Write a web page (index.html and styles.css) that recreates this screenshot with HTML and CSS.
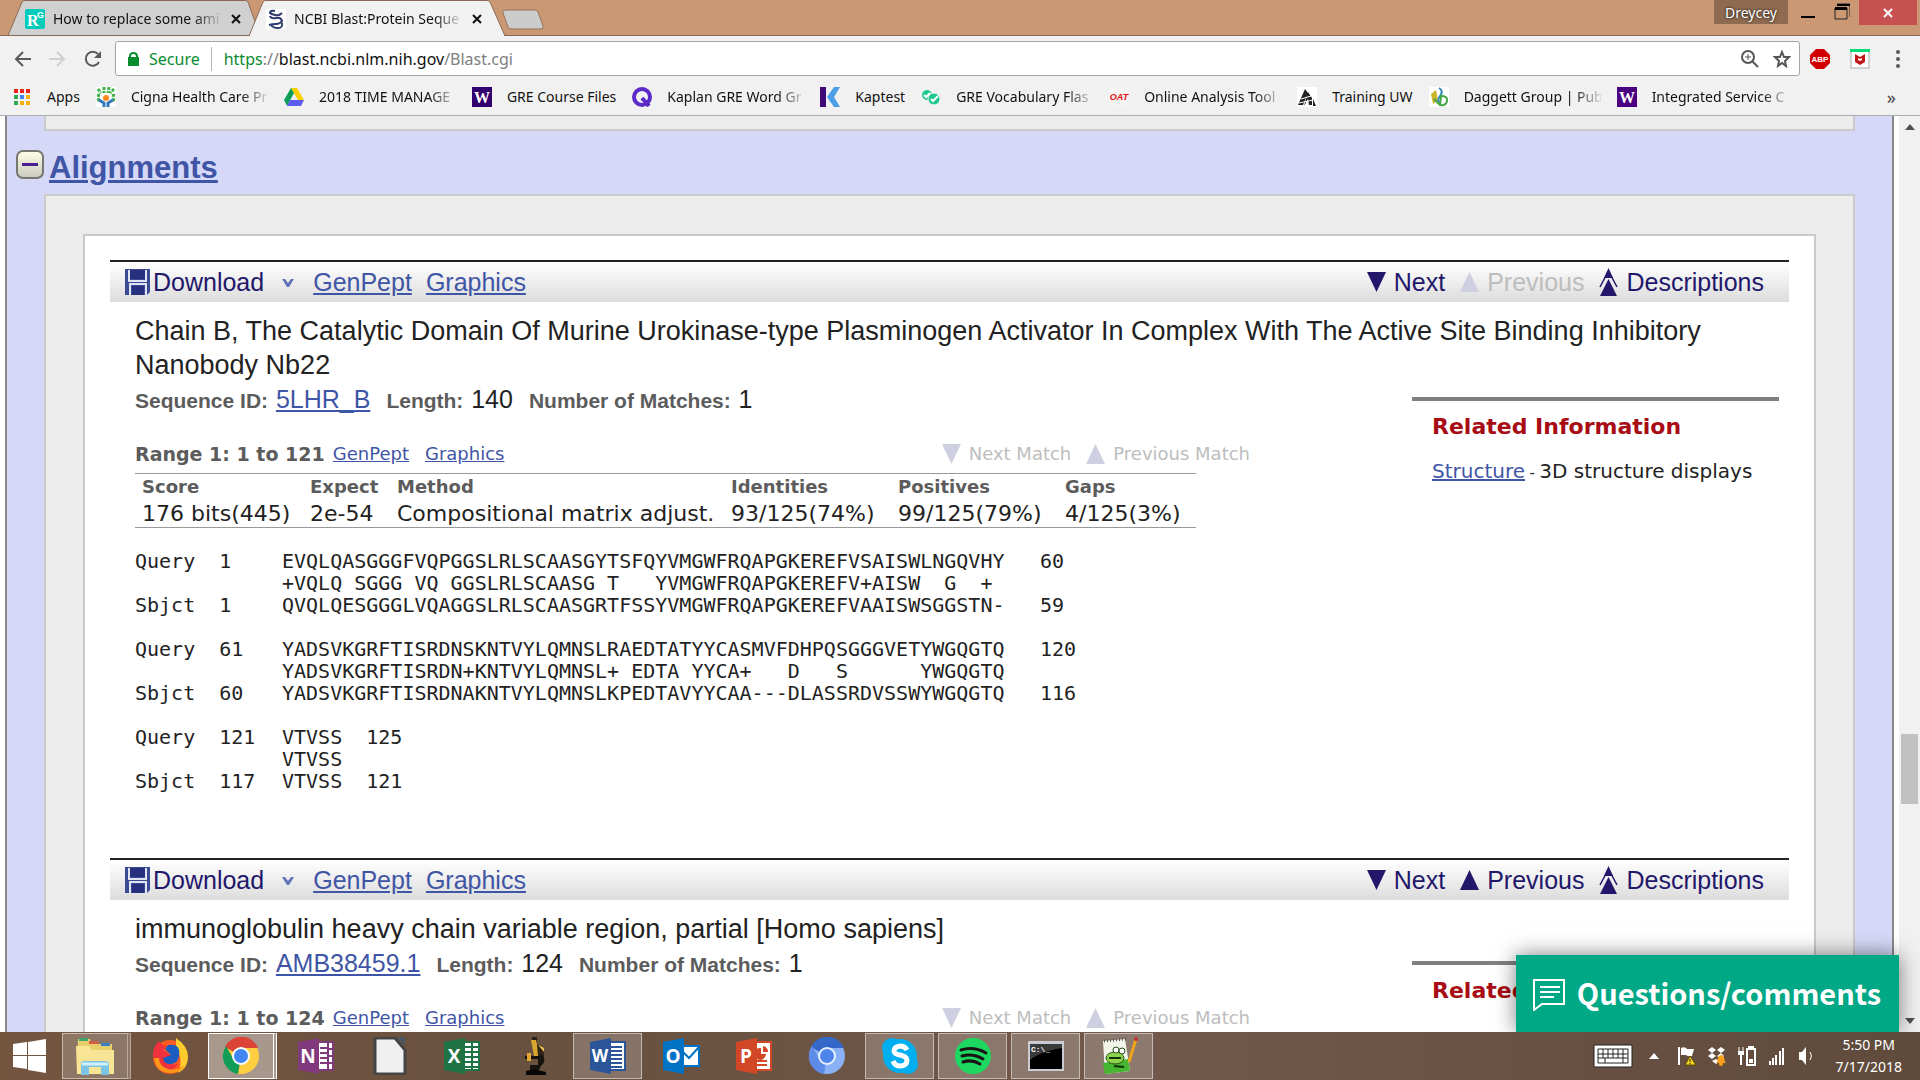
FILE: index.html
```html
<!DOCTYPE html>
<html lang="en">
<head>
<meta charset="utf-8">
<title>NCBI Blast:Protein Sequence</title>
<link rel="stylesheet" href="styles.css">
</head>
<body>
<svg class="defs" aria-hidden="true">
  <symbol id="disk" viewBox="0 0 25 26"><path d="M0 0h25v23l-3 3H0z" fill="#3a4a94"/><path d="M4 1v11h17V1" fill="none" stroke="#dfe3f2" stroke-width="2"/><path d="M5 1h15v9H5z" fill="#26307e"/><path d="M5 26V15h16v11" fill="none" stroke="#dfe3f2" stroke-width="2"/><path d="M7 17h12v9H7z" fill="#26307e"/></symbol>
  <symbol id="down" viewBox="0 0 19 20"><path d="M0 0h19L9.500 20z"/></symbol>
  <symbol id="up" viewBox="0 0 19 20"><path d="M0 20h19L9.500 0z"/></symbol>
  <symbol id="top" viewBox="0 0 19 28"><path d="M1 28h17L9.500 11z"/><path d="M1 19 9.500 3 18 19" fill="none" stroke="currentColor" stroke-width="1.500"/><path d="M5 10 9.500 0 14 10z"/></symbol>
  <symbol id="chev" viewBox="0 0 14 9"><path d="M1 1h3l3 4 3-4h3L8 9H6z" fill="#5f73b5"/></symbol>
  <symbol id="cross" viewBox="0 0 10 10"><path d="M1 1l8 8M9 1L1 9" stroke="currentColor" stroke-width="2"/></symbol>
</svg>

<header class="browser">
  <div class="tabs">
    <div class="tab">
      <svg class="tab-shape" viewBox="0 0 249 36" preserveAspectRatio="none"><path d="M0 35.500 14 2q1-1.500 3-1.500h220q2 0 3 1.500l9 25v8.500z" fill="#d0d0d0" stroke="#8a6a55"/></svg>
      <svg class="fav" viewBox="0 0 20 20"><rect width="20" height="20" rx="2" fill="#00ccbb"/><text x="2" y="17" class="fav-serif">R</text><text x="12" y="9" class="fav-g">G</text></svg>
      <span class="tab-title">How to replace some ami</span>
      <button class="tab-close" aria-label="Close tab"><svg><use href="#cross"/></svg></button>
    </div>
    <div class="tab active">
      <svg class="tab-shape" viewBox="0 0 257 36" preserveAspectRatio="none"><path d="M0 36 14 2q1-1.500 3-1.500h221q2 0 3 1.500l15 34z" fill="#f1f1f1" stroke="#8a6a55"/><path d="M1 36h254" stroke="#f1f1f1" stroke-width="2"/></svg>
      <svg class="fav" viewBox="0 0 20 20"><rect width="20" height="20" fill="#fff"/><path d="M16 4Q13 7 9 6T4 4q0-3 5-2M4 7q1 3 6 2t6 3q-2 3-6 3t-7 1M16 14q1 5-4 5t-7-3" fill="none" stroke="#2d3c6b" stroke-width="2"/></svg>
      <span class="tab-title">NCBI Blast:Protein Seque</span>
      <button class="tab-close" aria-label="Close tab"><svg><use href="#cross"/></svg></button>
    </div>
    <button class="new-tab" aria-label="New tab"><svg viewBox="0 0 42 21"><path d="M4 1h29q2 0 3 2l5 14q1 3-2 3H10q-3 0-4-2L1 4q-1-3 3-3z" fill="#ccc" stroke="#94735c"/></svg></button>
    <div class="window-controls">
      <button class="user">Dreycey</button>
      <button class="wc" aria-label="Minimize"><svg viewBox="0 0 16 20"><path d="M1 16h14v2H1z"/></svg></button>
      <button class="wc" aria-label="Restore"><svg viewBox="0 0 16 20"><path d="M3 4h13v13M1 8v11h12V8z" fill="none" stroke="#222" stroke-width="1"/><path d="M3 4h13v2H3zM1 7h12v3H1z"/></svg></button>
      <button class="close" aria-label="Close"><svg><use href="#cross"/></svg></button>
    </div>
  </div>

  <div class="toolbar">
    <button class="nav" aria-label="Back"><svg viewBox="0 0 18 18"><path d="M17 9H3M9 2 2 9l7 7" fill="none" stroke="#5a5a5a" stroke-width="2"/></svg></button>
    <button class="nav" aria-label="Forward"><svg viewBox="0 0 18 18"><path d="M1 9h14M9 2l7 7-7 7" fill="none" stroke="#d0d0d0" stroke-width="2"/></svg></button>
    <button class="nav reload" aria-label="Reload"><svg viewBox="0 0 18 18"><path d="M15 12A7 7 0 1 1 14 4" fill="none" stroke="#5a5a5a" stroke-width="2"/><path d="M17 1v7h-7z" fill="#5a5a5a"/></svg></button>
    <div class="omnibox">
      <svg class="lock" viewBox="0 0 11 14"><path d="M0 5h11v9H0z" fill="#0b8b30"/><path d="M2 6V4a3.500 3 0 0 1 7 0v2" fill="none" stroke="#0b8b30" stroke-width="2"/></svg>
      <span class="secure">Secure</span>
      <div class="url" role="textbox" aria-label="Address"><span class="scheme">https</span><span class="dim">://</span>blast.ncbi.nlm.nih.gov<span class="dim">/Blast.cgi</span></div>
      <button class="icon" aria-label="Zoom"><svg viewBox="0 0 18 18"><circle cx="7" cy="7" r="6" fill="none" stroke="#555" stroke-width="2"/><path d="M11 11l6 6" stroke="#555" stroke-width="2"/><path d="M4 7h6M7 4v6" stroke="#555"/></svg></button>
      <button class="icon" aria-label="Bookmark this page"><svg viewBox="0 0 18 18"><path d="M9 2l2 5h5l-4 4 1 5-4-3-4 3 1-5-4-4h5z" fill="none" stroke="#555" stroke-width="2"/></svg></button>
    </div>
    <button class="ext" aria-label="Adblock"><svg viewBox="0 0 20 20"><path d="M6 0h8l6 6v8l-6 6H6l-6-6V6z" fill="#d00000"/><text x="10" y="13" class="fav-abp">ABP</text></svg></button>
    <button class="ext" aria-label="Web advisor"><svg viewBox="0 0 20 20"><rect x="1" y="1" width="18" height="18" fill="#fff" stroke="#aaa"/><path d="M0 0h20v3H0z" fill="#05dc78"/><path d="M5 5l5 3 5-3v8l-5 3-5-3z" fill="#c01818"/><path d="M8 9l2 1 2-1v2l-2 1-2-1z" fill="#fff"/></svg></button>
    <button class="ext" aria-label="Menu"><svg viewBox="0 0 20 20"><g fill="#5a5a5a"><circle cx="10" cy="3" r="2"/><circle cx="10" cy="10" r="2"/><circle cx="10" cy="17" r="2"/></g></svg></button>
  </div>

  <nav class="bookmarks">
    <a href="#"><svg viewBox="0 0 20 20"><g fill="#e8241c"><path d="M2 2h4v4H2zM8 2h4v4H8zM14 2h4v4h-4z"/></g><path d="M2 8h4v4H2z" fill="#2da94f"/><path d="M8 8h4v4H8z" fill="#4382f5"/><path d="M14 8h4v4h-4zM14 14h4v4h-4zM8 14h4v4H8z" fill="#f3b20b"/><path d="M2 14h4v4H2z" fill="#2da94f"/></svg><span>Apps</span></a>
    <a href="#"><svg viewBox="0 0 20 20"><rect width="20" height="20" fill="#fff"/><path d="M2 2l3 4M8 0v6M13 0l-1 6M18 2l-4 4M1 8l4 1M19 8l-4 1M1 13l4-1M19 13l-4-1" stroke="#3eb34a" stroke-width="3" stroke-dasharray="3 1"/><circle cx="10" cy="11" r="3" fill="#f58a1f"/><path d="M3 13l5 3v4M17 13l-5 3v4" fill="none" stroke="#3076bd" stroke-width="3"/></svg><span class="long">Cigna Health Care Pr</span></a>
    <a href="#"><svg viewBox="0 0 20 20"><path d="M7 1h6l7 12h-6z" fill="#ffcf00"/><path d="M7 1l3 5-7 13-3-6z" fill="#0f9d58"/><path d="M6 13h14l-3 6H3z" fill="#5a5bf0"/></svg><span class="long">2018 TIME MANAGE</span></a>
    <a href="#"><svg viewBox="0 0 20 20"><rect width="20" height="20" fill="#33006f"/><text x="10" y="16" class="fav-w">W</text></svg><span>GRE Course Files</span></a>
    <a href="#"><svg viewBox="0 0 20 20"><circle cx="10" cy="10" r="8" fill="none" stroke="#5b2ac8" stroke-width="4"/><path d="M10 11l7 8" stroke="#5b2ac8" stroke-width="4"/></svg><span class="long">Kaplan GRE Word Gr</span></a>
    <a href="#"><svg viewBox="0 0 20 20"><path d="M0 0h6v20H0z" fill="#3d0a78"/><path d="M14 0h6l-6 10 6 10h-6L7 10z" fill="#4a9fe8"/></svg><span>Kaptest</span></a>
    <a href="#"><svg viewBox="0 0 20 20"><circle cx="6" cy="8" r="5" fill="#1cc98c"/><circle cx="13" cy="12" r="6" fill="#1cc98c" stroke="#f1f1f1"/><path d="M3 8l2 2 4-4M10 12l2 2 5-5" fill="none" stroke="#fff" stroke-width="2"/></svg><span class="long">GRE Vocabulary Flas</span></a>
    <a href="#"><svg viewBox="0 0 20 20"><rect width="20" height="20" fill="#f6f3f3"/><text x="10" y="13" class="fav-oat">OAT</text></svg><span class="long">Online Analysis Tool</span></a>
    <a href="#"><svg viewBox="0 0 20 20"><rect width="20" height="20" fill="#fff"/><path d="M8 2l3 4-5 12H1zM11 5l4 6v7h-3l-1-6-4 7zM16 12l3 7h-3z" fill="#222"/><path d="M4 12l10-3M2 16l14-3" stroke="#fff"/></svg><span>Training UW</span></a>
    <a href="#"><svg viewBox="0 0 20 20"><rect width="20" height="20" fill="#fff"/><path d="M2 7l5-4 2 10-5 4z" fill="#c9b52b"/><path d="M10 1q5 3 1 8t1 9" fill="none" stroke="#2a86b8" stroke-width="2"/><path d="M12 9q7 0 6 5t-7 4zM5 12l6 6" fill="none" stroke="#46a847" stroke-width="2"/></svg><span class="long">Daggett Group | Pub</span></a>
    <a href="#"><svg viewBox="0 0 20 20"><rect width="20" height="20" fill="#4b0082"/><text x="10" y="16" class="fav-w">W</text></svg><span class="long">Integrated Service C</span></a>
    <button class="more" aria-label="More bookmarks">»</button>
  </nav>
</header>

<div class="viewport">
  <main class="page">
    <div class="prev-box"></div>
    <h2 class="section-head">
      <svg viewBox="0 0 28 29"><defs><linearGradient id="btn" x2="0" y2="1"><stop stop-color="#ffffe8"/><stop offset="1" stop-color="#c9c9bd"/></linearGradient></defs><rect x="1" y="1" width="26" height="27" rx="6" fill="url(#btn)" stroke="#77776f" stroke-width="2"/><path d="M6 13h16v3H6z" fill="#4b1f93"/></svg>
      <a href="#">Alignments</a>
    </h2>
    <div class="outer">
      <div class="inner">
        <section class="hit">
          <div class="bar">
            <button class="download"><svg><use href="#disk"/></svg>Download<svg class="chev"><use href="#chev"/></svg></button>
            <a href="#">GenPept</a><a href="#">Graphics</a>
            <div class="jump">
              <button><svg><use href="#down"/></svg>Next</button>
              <button disabled><svg><use href="#up"/></svg>Previous</button>
              <button><svg class="tall"><use href="#top"/></svg>Descriptions</button>
            </div>
          </div>
          <div class="hit-body">
            <h3>Chain B, The Catalytic Domain Of Murine Urokinase-type Plasminogen Activator In Complex With The Active Site Binding Inhibitory Nanobody Nb22</h3>
            <div class="cols">
              <div class="left">
                <p class="meta"><span><b>Sequence ID: </b><a href="#">5LHR_B</a></span><span><b>Length: </b>140</span><span><b>Number of Matches: </b>1</span></p>
                <div class="range">
                  <h4>Range 1: 1 to 121</h4><a href="#">GenPept</a><a href="#">Graphics</a>
                  <div class="match"><button disabled><svg><use href="#down"/></svg>Next Match</button><button disabled><svg><use href="#up"/></svg>Previous Match</button></div>
                </div>
                <table class="stats">
                  <thead><tr><th class="c-score">Score</th><th class="c-exp">Expect</th><th class="c-meth">Method</th><th class="c-frac">Identities</th><th class="c-frac">Positives</th><th>Gaps</th></tr></thead>
                  <tbody><tr><td>176 bits(445)</td><td>2e-54</td><td>Compositional matrix adjust.</td><td>93/125(74%)</td><td>99/125(79%)</td><td>4/125(3%)</td></tr></tbody>
                </table>
                <div class="align">
                  <pre>Query  1</pre><pre>EVQLQASGGGFVQPGGSLRLSCAASGYTSFQYVMGWFRQAPGKEREFVSAISWLNGQVHY</pre><pre>60</pre>
                  <pre> </pre><pre>+VQLQ SGGG VQ GGSLRLSCAASG T   YVMGWFRQAPGKEREFV+AISW  G  +</pre><pre> </pre>
                  <pre>Sbjct  1</pre><pre>QVQLQESGGGLVQAGGSLRLSCAASGRTFSSYVMGWFRQAPGKEREFVAAISWSGGSTN-</pre><pre>59</pre>
                </div>
                <div class="align">
                  <pre>Query  61</pre><pre>YADSVKGRFTISRDNSKNTVYLQMNSLRAEDTATYYCASMVFDHPQSGGGVETYWGQGTQ</pre><pre>120</pre>
                  <pre> </pre><pre>YADSVKGRFTISRDN+KNTVYLQMNSL+ EDTA YYCA+   D   S      YWGQGTQ</pre><pre> </pre>
                  <pre>Sbjct  60</pre><pre>YADSVKGRFTISRDNAKNTVYLQMNSLKPEDTAVYYCAA---DLASSRDVSSWYWGQGTQ</pre><pre>116</pre>
                </div>
                <div class="align last">
                  <pre>Query  121</pre><pre>VTVSS  125</pre>
                  <pre> </pre><pre>VTVSS</pre>
                  <pre>Sbjct  117</pre><pre>VTVSS  121</pre>
                </div>
              </div>
              <aside class="related"><h4>Related Information</h4><p><a href="#">Structure</a><span class="dash"> - </span>3D structure displays</p></aside>
            </div>
          </div>
        </section>

        <section class="hit">
          <div class="bar">
            <button class="download"><svg><use href="#disk"/></svg>Download<svg class="chev"><use href="#chev"/></svg></button>
            <a href="#">GenPept</a><a href="#">Graphics</a>
            <div class="jump">
              <button><svg><use href="#down"/></svg>Next</button>
              <button><svg><use href="#up"/></svg>Previous</button>
              <button><svg class="tall"><use href="#top"/></svg>Descriptions</button>
            </div>
          </div>
          <div class="hit-body">
            <h3>immunoglobulin heavy chain variable region, partial [Homo sapiens]</h3>
            <div class="cols">
              <div class="left">
                <p class="meta"><span><b>Sequence ID: </b><a href="#">AMB38459.1</a></span><span><b>Length: </b>124</span><span><b>Number of Matches: </b>1</span></p>
                <div class="range">
                  <h4>Range 1: 1 to 124</h4><a href="#">GenPept</a><a href="#">Graphics</a>
                  <div class="match"><button disabled><svg><use href="#down"/></svg>Next Match</button><button disabled><svg><use href="#up"/></svg>Previous Match</button></div>
                </div>
              </div>
              <aside class="related"><h4>Related Information</h4></aside>
            </div>
          </div>
        </section>
      </div>
    </div>
  </main>
  <div class="scrollbar">
    <svg viewBox="0 0 10 6"><path d="M0 6h10L5 0z"/></svg>
    <div class="track"><div class="thumb"></div></div>
    <svg viewBox="0 0 10 6"><path d="M0 0h10L5 6z"/></svg>
  </div>
  <button class="feedback"><svg viewBox="0 0 32 32"><path d="M1 1h30v24H9l-8 6z" fill="none" stroke="#fff" stroke-width="2"/><path d="M7 8h20M7 13h20M7 18h14" stroke="#fff" stroke-width="2"/></svg>Questions/comments</button>
</div>

<footer class="taskbar">
  <button class="start" aria-label="Start"><svg viewBox="0 0 33 34"><path d="M0 5l14-2v13H0zM15 3l18-3v16H15zM0 17h14v13L0 28zM15 17h18v17l-18-3z" fill="#fff"/></svg></button>
  <div class="apps-row">
    <button class="open stack" aria-label="File Explorer"><svg class="wide" viewBox="0 0 40 38"><path d="M3 2h12l2 5h20v30H2z" fill="#e9cf6b"/><path d="M4 1h9v3H4z" fill="#3fa66b"/><path d="M14 4h9v3h-9z" fill="#d95b43"/><path d="M26 6h9v3h-9z" fill="#3b7fc4"/><path d="M1 9h13l3 4h22v24H2z" fill="#f7e595"/><path d="M6 38V27q0-3 3-3h22q3 0 3 3v11h-8v-8H14v8z" fill="#7cc4e4"/><path d="M7 27h26" stroke="#d2f0fb" stroke-width="3"/></svg></button>
    <button aria-label="Firefox"><svg viewBox="0 0 38 38"><circle cx="19" cy="20" r="17" fill="#ff5a1f"/><path d="M25 1q12 8 12 19t-10 16q6-14-2-25z" fill="#ffcb2d"/><path d="M2 17Q3 8 8 4q3 5 8 5l-4 4q4 2 7 5l-5 4q4 7 13 5l-9 9Q4 34 2 17z" fill="#f0313e"/><path d="M17 8q13-2 11 11-1 8-9 8-6 0-7-6l8-3-6-6z" fill="#1b5dc0"/><path d="M3 21q2 14 15 15 11 1 16-8-8 6-17 4-9-3-9-11z" fill="#ff9818"/></svg></button>
    <button class="open stack current" aria-label="Chrome"><svg viewBox="0 0 38 38"><circle cx="19" cy="19" r="18" fill="#ffcd40"/><path d="M19 19L3 10A18 18 0 0 1 36 11H19z" fill="#db4437"/><path d="M19 19l-3 18A18 18 0 0 1 4 9l8 14 9 4z" fill="#0f9d58"/><circle cx="19" cy="19" r="9" fill="#fff"/><circle cx="19" cy="19" r="7" fill="#4285f4"/></svg></button>
    <button aria-label="OneNote"><svg viewBox="0 0 38 38"><path d="M18 5h18v28H18z" fill="#fff" stroke="#80397b" stroke-width="2"/><path d="M31 5v28M23 11h7M23 16h7M23 21h7M23 26h7M31 12h5M31 19h5M31 26h5" stroke="#80397b" stroke-width="2"/><path d="M1 5l21-4v36L1 33z" fill="#80397b"/><text x="11" y="26" class="app-letter">N</text></svg></button>
    <button aria-label="LibreOffice"><svg viewBox="0 0 38 38"><path d="M5 1h20l10 12v24H5z" fill="#f0f0f0" stroke="#444" stroke-width="3"/><path d="M27 0h8v9z" fill="#4c5560"/></svg></button>
    <button aria-label="Excel"><svg viewBox="0 0 38 38"><path d="M18 5h18v28H18z" fill="#fff" stroke="#1f7244" stroke-width="2"/><path d="M22 10h14M22 15h14M22 20h14M22 25h14M22 30h14M29 6v26" stroke="#1f7244" stroke-width="2"/><path d="M1 5l21-4v36L1 33z" fill="#1f7244"/><text x="11" y="26" class="app-letter">X</text></svg></button>
    <button aria-label="Microscope"><svg viewBox="0 0 38 38"><path d="M16 0h5v9h-5z" fill="#2a2118"/><path d="M15 3h5l4 16h-6z" fill="#d9a62e"/><path d="M21 7l7 5v8h-6z" fill="#302519"/><path d="M22 8l6 3v4z" fill="#eac04e"/><path d="M9 19h16v3H9zM25 17q7 6 0 12l-2 4H14v-5h8v-8z" fill="#17130f"/><path d="M10 38v-4l8-2 12 3v3z" fill="#090807"/><path d="M11 16h4v8h-4z" fill="#e0a832"/></svg></button>
    <button class="open" aria-label="Word"><svg viewBox="0 0 38 38"><path d="M18 5h18v28H18z" fill="#fff" stroke="#2a5699" stroke-width="2"/><path d="M22 10h11M22 14h11M22 18h11M22 22h11M22 26h11M22 30h11" stroke="#2a5699" stroke-width="2"/><path d="M1 5l21-4v36L1 33z" fill="#2a5699"/><text x="11" y="25" class="app-letter small">W</text></svg></button>
    <button aria-label="Outlook"><svg viewBox="0 0 38 38"><path d="M20 9h17v20H20z" fill="#fff" stroke="#0072c6" stroke-width="2"/><path d="M21 15l6 6 10-11" fill="none" stroke="#0072c6" stroke-width="2"/><path d="M1 5l21-4v36L1 33z" fill="#0072c6"/><text x="11" y="26" class="app-letter">O</text></svg></button>
    <button aria-label="PowerPoint"><svg viewBox="0 0 38 38"><path d="M18 5h18v28H18z" fill="#fff" stroke="#d24726" stroke-width="2"/><path d="M22 24h10M22 28h10" stroke="#d24726" stroke-width="2"/><path d="M26 11a6 6 0 1 0 5 6h-5z" fill="#d24726"/><path d="M28 9v6h5q0-5-5-6z" fill="#d24726"/><path d="M1 5l21-4v36L1 33z" fill="#d24726"/><text x="11" y="26" class="app-letter">P</text></svg></button>
    <button aria-label="Chromium"><svg viewBox="0 0 38 38"><circle cx="19" cy="19" r="18" fill="#8ab0f5"/><path d="M19 19L3 10A18 18 0 0 1 36 11H19z" fill="#3567c9"/><path d="M19 19l-3 18A18 18 0 0 1 4 9l8 14 9 4z" fill="#5c8be8"/><circle cx="19" cy="19" r="8" fill="#4f84ec" stroke="#e9f0ff" stroke-width="2"/></svg></button>
    <button class="open" aria-label="Skype"><svg viewBox="0 0 38 38"><circle cx="19" cy="19" r="17" fill="#00aff0"/><circle cx="11" cy="11" r="10" fill="#00aff0"/><circle cx="27" cy="27" r="10" fill="#00aff0"/><path d="M26 13q-2-4-7-4-6 1-6 5 0 3 6 4t7 5q0 6-7 6-5 0-7-5" fill="none" stroke="#fff" stroke-width="5"/></svg></button>
    <button class="open" aria-label="Spotify"><svg viewBox="0 0 38 38"><circle cx="19" cy="19" r="18" fill="#1ed760"/><path d="M7 13q13-4 25 3M8 19q11-3 21 3M9 25q9-3 17 2" fill="none" stroke="#191414" stroke-width="3" stroke-linecap="round"/></svg></button>
    <button class="open" aria-label="Command Prompt"><svg viewBox="0 0 38 38"><path d="M1 4h36v30H1z" fill="#c9ccd2"/><path d="M3 7h32v25H3z" fill="#000"/><path d="M3 7h32v4Q12 15 3 23z" fill="#3b3b3b"/><text x="4" y="15" class="app-cmd">C:\_</text></svg></button>
    <button class="open" aria-label="Notepad++"><svg viewBox="0 0 38 38"><path d="M3 4l22-2 5 32-25 3z" fill="#f2f5ea"/><path d="M3 26l25-4 2 12-25 3z" fill="#46b52f"/><path d="M4 4l22-2" stroke="#555" stroke-width="3" stroke-dasharray="1 2"/><ellipse cx="15" cy="21" rx="9" ry="6" fill="#8ed44a" stroke="#2b4d18"/><circle cx="16" cy="13" r="3" fill="#fff" stroke="#2b4d18"/><circle cx="22" cy="14" r="3" fill="#fff" stroke="#2b4d18"/><path d="M9 21h12M14 29l10 1" stroke="#16300c" stroke-width="2"/><path d="M29 25L36 2" stroke="#f0a21c" stroke-width="3"/><circle cx="36" cy="2" r="2" fill="#c03030"/></svg></button>
  </div>
  <div class="tray">
    <svg class="kbd" viewBox="0 0 40 24"><rect x="1" y="1" width="38" height="22" rx="1" fill="#fff" stroke="#222"/><path d="M5 5h30v14H5zM5 10h30M5 14h30M10 5v9M15 5v9M20 5v9M25 5v9M30 5v14M12 14v5" fill="none" stroke="#222"/></svg>
    <svg class="caret" viewBox="0 0 10 6"><path d="M0 6h10L5 0z" fill="#fff"/></svg>
    <svg viewBox="0 0 20 20"><path d="M1 1h2v18H1z" fill="#fff"/><path d="M4 2q4-2 6 1h7l-2 7q-4 1-6-1H4z" fill="#fff"/><path d="M13 10l6 9H8z" fill="#f5d21b" stroke="#5c4a05"/><path d="M13 13v3M13 17v1" stroke="#222"/></svg>
    <svg viewBox="0 0 20 20"><path d="M5 1l4 3-4 3-4-3zM14 1l4 3-4 3-4-3zM5 7l4 3-4 3-4-3zM14 7l3 3-3 3-4-3zM9 13l4 2-4 3-4-3z" fill="#fff"/><path d="M9 17q2-2 2-6 3-4 6 0 0 4 2 6z" fill="#f9a11b"/><circle cx="14" cy="18" r="2" fill="#f9a11b"/></svg>
    <svg viewBox="0 0 20 20"><path d="M2 1v4M6 1v4" stroke="#fff"/><path d="M1 5h6v4H5v10H3V9H1z" fill="#fff"/><path d="M10 3h8v16h-8zM12 1h4v2h-4z" fill="none" stroke="#fff" stroke-width="2"/><path d="M12 13h4v4h-4z" fill="#fff"/></svg>
    <svg viewBox="0 0 20 20"><path d="M2 15h2v4H2zM5 12h2v7H5zM8 9h2v10H8zM12 5h2v14h-2zM15 2h2v17h-2z" fill="#fff"/></svg>
    <svg viewBox="0 0 20 20"><path d="M2 6h3l4-5v18l-4-5H2z" fill="#fff"/><path d="M13 6q3 4 0 8" fill="none" stroke="#fff"/></svg>
    <div class="clock"><span>5:50 PM</span><span>7/17/2018</span></div>
  </div>
</footer>
</body>
</html>
```
FILE: styles.css
```css
* { box-sizing: border-box; }
body {
  margin: 0;
  height: 100vh;
  display: flex;
  flex-direction: column;
  overflow: hidden;
  font-family: "Liberation Sans", Arial, sans-serif;
  color: #222;
}
button { border: 0; padding: 0; background: none; font: inherit; color: inherit; }
h2, h3, h4, p, pre { margin: 0; }
svg { display: block; flex: none; }
.defs { position: absolute; width: 0; height: 0; }
a { color: #3f55a5; }

/* Browser frame */
.browser {
  flex: none;
  background: #f1f1f1;
  border-bottom: 1px solid #adadad;
  font-family: "Noto Sans", sans-serif;
  font-size: 15px;
  color: #111;
}
.tabs {
  display: flex;
  height: 36px;
  padding-left: 8px;
  background: #cb9874;
  border-bottom: 1px solid #8a6a55;
}
.tab {
  position: relative;
  display: flex;
  align-items: center;
  width: 249px;
  height: 36px;
  padding: 2px 0 0 17px;
}
.tab.active { width: 257px; margin-left: -8px; z-index: 1; }
.tab-shape { position: absolute; top: 0; left: 0; width: 100%; height: 36px; }
.fav, .tab-title, .tab-close { position: relative; }
.fav { width: 20px; height: 20px; }
.tab-title {
  width: 173px;
  margin-left: 8px;
  white-space: nowrap;
  line-height: 22px;
  font-size: 14px;
  mask-image: linear-gradient(to right, #000 140px, transparent 170px);
}
.tab-close { width: 10px; margin-left: 5px; }
.tab-close svg { width: 10px; height: 10px; }
.fav-serif { font: bold 16px "Liberation Serif", serif; fill: #fff; }
.fav-g { font: bold 9px "Liberation Sans", sans-serif; fill: #fff; }
.fav-w { font: bold 16px "Liberation Serif", serif; fill: #fff; text-anchor: middle; }
.fav-oat { font: italic bold 9px "Liberation Sans", sans-serif; fill: #e01010; text-anchor: middle; }
.fav-abp { font: bold 8px "Liberation Sans", sans-serif; fill: #fff; text-anchor: middle; }
.new-tab { align-self: flex-start; margin-left: -4px; padding-top: 9px; }
.new-tab svg { width: 42px; height: 21px; }
.window-controls { display: flex; align-items: flex-start; margin-left: auto; padding-right: 3px; }
.user {
  width: 74px;
  height: 24px;
  background: #8e6b50;
  color: #fff;
  font-size: 14px;
  text-shadow: 0 0 3px #000;
}
.wc { width: 34px; padding-left: 12px; }
.wc svg { width: 16px; height: 20px; }
.close {
  width: 58px;
  height: 25px;
  margin-left: 3px;
  display: grid;
  place-items: center;
  background: #c75050;
  color: #fff;
}
.close svg { width: 10px; height: 10px; }

.toolbar { display: flex; align-items: center; height: 45px; padding: 0 12px 0 14px; }
.nav { width: 34px; }
.nav.reload { width: 33px; padding-left: 2px; }
.nav svg { width: 18px; height: 18px; }
.omnibox {
  flex: 1;
  display: flex;
  align-items: center;
  height: 35px;
  padding: 0 8px 0 12px;
  background: #fff;
  border: 1px solid #a5a5a5;
  border-radius: 3px;
}
.lock { width: 11px; height: 14px; }
.secure { margin-left: 10px; padding-right: 11px; border-right: 1px solid #b5b5b5; color: #0b8b30; line-height: 24px; font-size: 16px; }
.url { flex: 1; margin-left: 12px; line-height: 24px; font-size: 16px; }
.scheme { color: #0b8b30; }
.dim { color: #808080; }
.icon { margin-left: 14px; }
.icon svg { width: 18px; height: 18px; }
.omnibox + .ext { margin-left: 10px; }
.ext svg { width: 20px; height: 20px; }
.ext + .ext { margin-left: 20px; }
.toolbar .ext:last-child { margin-left: 18px; }

.bookmarks { display: flex; align-items: center; gap: 16px; height: 34px; padding: 0 24px 2px 12px; }
.bookmarks a { display: flex; align-items: center; gap: 15px; color: #111; text-decoration: none; font-size: 14px; line-height: 22px; }
.bookmarks svg { width: 20px; height: 20px; }
.bookmarks span { white-space: nowrap; }
.bookmarks .long { width: 137px; mask-image: linear-gradient(to right, #000 110px, transparent 140px); }
.more { margin-left: auto; font-size: 18px; line-height: 22px; color: #444; }

/* Page area */
.viewport { flex: 1; min-height: 0; position: relative; display: flex; overflow: hidden; background: #fff; }
.page {
  flex: 1;
  min-width: 0;
  align-self: flex-start;
  margin: 0 5px;
  padding: 0 37px;
  border: solid #888;
  border-width: 0 2px;
  background: #d5d8f7;
}
.prev-box { height: 15px; background: #ececec; border: 2px solid #cacaca; border-top: 0; }
.section-head {
  display: flex;
  align-items: center;
  gap: 5px;
  height: 63px;
  margin-left: -28px;
  padding-top: 3px;
  font-size: 31px;
  line-height: 36px;
}
.section-head a { padding-top: 7px; text-decoration-thickness: 3px; }
.section-head svg { width: 28px; height: 29px; }
.outer { padding: 38px 37px 0; background: #ececec; border: 2px solid #cacaca; }
.inner { padding: 24px 25px 66px; background: #fff; border: 2px solid #cacaca; }
.hit + .hit { margin-top: 66px; }
.bar {
  display: flex;
  align-items: center;
  gap: 14px;
  height: 42px;
  padding: 0 25px 0 15px;
  border-top: 2px solid #222;
  background: linear-gradient(#fff, #dcdcdc);
  font-size: 25px;
  line-height: 30px;
}
.bar button { display: flex; align-items: center; color: #22176b; }
.download { gap: 3px; }
.download svg { width: 25px; height: 26px; }
.download .chev { width: 14px; height: 9px; margin: 0 4px 0 14px; }
.jump { display: flex; gap: 15px; margin-left: auto; }
.jump button { gap: 8px; }
.jump svg, .match svg { width: 19px; height: 20px; fill: currentColor; }
.jump .tall { height: 28px; }
.bar button:disabled { color: #bdbdbd; }
button:disabled svg { color: #cfcfe2; }
.hit-body { padding: 12px 10px 0 25px; }
h3 { font-size: 27px; line-height: 34px; font-weight: normal; margin-right: 20px; }
.cols { display: flex; }
.left { flex: 1; }
.meta { display: flex; align-items: baseline; gap: 16px; font-size: 25px; line-height: 34px; }
.meta b { margin-right: 2px; font-size: 21px; color: #5c5c5c; }
.range, .stats, .related { font-family: "DejaVu Sans", Verdana, sans-serif; }
.range { display: flex; align-items: center; max-width: 1115px; margin-top: 24px; font-size: 18px; line-height: 24px; }
.range h4 { font-size: 19px; color: #5c5c5c; margin-right: 8px; }
.range a + a { margin-left: 16px; }
.match { display: flex; gap: 15px; margin-left: auto; color: #bdbdbd; }
.match button { display: flex; align-items: center; gap: 8px; }
.stats {
  width: 1061px;
  margin-top: 7px;
  table-layout: fixed;
  border-collapse: collapse;
  border-top: 1px solid #999;
  border-bottom: 1px solid #999;
}
.stats th, .stats td { padding: 0; text-align: left; white-space: nowrap; }
.stats th { font-size: 18px; line-height: 26px; color: #5c5c5c; }
.stats td { font-size: 22px; line-height: 27px; }
.stats th:first-child, .stats td:first-child { padding-left: 7px; }
.c-score { width: 175px; }
.c-exp { width: 87px; }
.c-meth { width: 334px; }
.c-frac { width: 167px; }
.align { display: grid; grid-template-columns: 147px 758px auto; margin-top: 22px; }
.align pre { font: 20px/22px "DejaVu Sans Mono", monospace; }
.align.last { grid-template-columns: 147px auto; }
.related { flex: none; width: 367px; margin-top: 15px; padding-left: 20px; border-top: 4px solid #808080; }
.related h4 { margin-top: 12px; font-size: 22px; line-height: 28px; color: #a80c14; }
.related p { margin-top: 16px; font-size: 20px; line-height: 28px; white-space: nowrap; }
.dash { font-family: "Liberation Sans", Arial, sans-serif; font-size: 16px; }

.scrollbar { flex: none; width: 21px; display: flex; flex-direction: column; align-items: center; padding: 8px 0; background: #f1f1f1; fill: #505050; }
.scrollbar svg { width: 10px; height: 6px; }
.track { flex: 1; width: 100%; padding: 0 2px; }
.thumb { height: 70px; margin-top: 604px; background: #c1c1c1; }
.feedback {
  position: absolute;
  right: 21px;
  bottom: 0;
  display: flex;
  align-items: center;
  gap: 12px;
  height: 77px;
  padding: 0 18px 4px 17px;
  background: #00a886;
  color: #fff;
  font: bold 29px/40px "Noto Sans CJK JP", sans-serif;
  box-shadow: 0 0 20px rgba(0, 0, 0, .5);
}
.feedback svg { width: 32px; height: 32px; margin-top: 7px; }

/* Taskbar */
.taskbar { flex: none; display: flex; height: 48px; background: linear-gradient(90deg, #745540, #68513f 30%, #72584a 60%, #5f4a3b); }
.start { width: 62px; padding-left: 13px; }
.start svg { width: 33px; height: 34px; }
.apps-row { display: flex; gap: 4px; padding: 1px 0; }
.apps-row button { width: 69px; display: grid; place-items: center; }
.apps-row svg { width: 38px; height: 38px; }
.apps-row .wide { width: 40px; }
.open { border: 1px solid rgba(255, 255, 255, .5); background: rgba(255, 255, 255, .2); }
.stack { border-right: 4px double #b5a79e; }
.current { border-color: #fff; background: rgba(255, 255, 255, .4); }
.app-letter { font: bold 19px "Open Sans", sans-serif; fill: #fff; text-anchor: middle; }
.app-letter.small { font-size: 17px; }
.app-cmd { font: bold 8px "Liberation Mono", monospace; fill: #fff; }
.tray { display: flex; align-items: center; gap: 10px; margin-left: auto; padding-right: 18px; color: #fff; }
.tray svg { width: 20px; height: 20px; }
.tray .kbd { width: 40px; height: 24px; margin-right: 6px; }
.tray .caret { width: 10px; height: 6px; margin-right: 8px; }
.clock { display: flex; flex-direction: column; align-items: center; margin-left: 9px; font: 14px/22px "Noto Sans", sans-serif; }
```
